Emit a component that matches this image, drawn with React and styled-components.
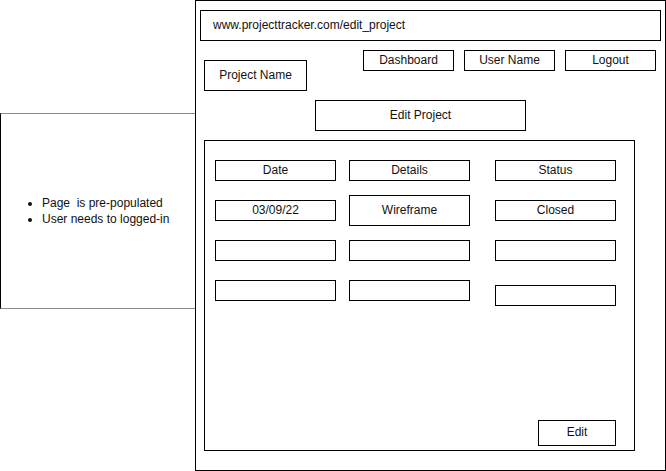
import React from 'react';
import styled, { createGlobalStyle } from 'styled-components';

const Global = createGlobalStyle`
  html, body {
    margin: 0;
    padding: 0;
    background: #fff;
  }
  body {
    font-family: "Liberation Sans", Arial, sans-serif;
    font-size: 12px;
    color: #111;
  }
`;

const Page = styled.div`
  display: flex;
  align-items: flex-start;
  width: 666px;
  height: 471px;
  overflow: hidden;
`;

const Note = styled.div`
  box-sizing: border-box;
  width: 195px;
  height: 196px;
  margin-top: 113px;
  border-left: 1px solid #000;
  border-top: 1px solid #8a8a8a;
  border-bottom: 1px solid #8a8a8a;
  display: flex;
  align-items: center;

  ul {
    margin: 0;
    padding: 0 0 1px 41px;
    line-height: 16px;
  }
  li {
    white-space: pre;
  }
`;

const Frame = styled.div`
  box-sizing: border-box;
  width: 471px;
  height: 471px;
  border: 1px solid #000;
  padding: 9px 4px 0;
  display: flex;
  flex-direction: column;
`;

const Box = styled.div`
  box-sizing: border-box;
  border: 1px solid #000;
  display: flex;
  align-items: center;
  justify-content: ${p => (p.$left ? 'flex-start' : 'center')};
  width: ${p => p.$w || 'auto'};
  height: ${p => p.$h || '21px'};
  padding: 0 0 2px ${p => (p.$left ? '12px' : '0')};
  white-space: nowrap;
`;

const UrlBar = styled(Box)`
  height: 31px;
`;

const Header = styled.div`
  display: flex;
  justify-content: space-between;
  align-items: flex-start;
  margin-top: 9px;
  padding: 0 5px 0 4px;
`;

const ProjectName = styled(Box)`
  margin-top: 10px;
`;

const Nav = styled.div`
  display: flex;
  gap: 10px;
`;

const Title = styled(Box)`
  margin: 9px 0 0 115px;
`;

const Panel = styled.div`
  box-sizing: border-box;
  width: 431px;
  height: 311px;
  margin: 9px 0 0 4px;
  border: 1px solid #000;
  padding: 19px 18px 4px 10px;
  display: flex;
  flex-direction: column;
`;

const Grid = styled.div`
  display: grid;
  grid-template-columns: 134px 146px 121px;
  grid-auto-rows: 40px;
  align-items: start;
`;

const Cell = styled(Box)`
  width: 121px;
  height: ${p => (p.$tall ? '31px' : '21px')};
  margin-top: ${p => (p.$tall ? '-5px' : p.$drop ? '5px' : '0')};
`;

const Footer = styled.div`
  margin-top: auto;
  display: flex;
  justify-content: flex-end;
`;

const rows = [
  ['Date', 'Details', 'Status'],
  ['03/09/22', 'Wireframe', 'Closed'],
  ['', '', ''],
  ['', '', ''],
];

export default function App() {
  return (
    <>
      <Global />
      <Page>
        <Note>
          <ul>
            <li>Page  is pre-populated</li>
            <li>User needs to logged-in</li>
          </ul>
        </Note>
        <Frame>
          <UrlBar $left>www.projecttracker.com/edit_project</UrlBar>
          <Header>
            <ProjectName $w="103px" $h="31px">Project Name</ProjectName>
            <Nav>
              <Box $w="91px">Dashboard</Box>
              <Box $w="91px">User Name</Box>
              <Box $w="91px">Logout</Box>
            </Nav>
          </Header>
          <Title $w="211px" $h="31px">Edit Project</Title>
          <Panel>
            <Grid>
              {rows.map((row, r) =>
                row.map((text, c) => (
                  <Cell
                    key={`${r}-${c}`}
                    $tall={r === 1 && c === 1}
                    $drop={r === 3 && c === 2}
                  >
                    {text}
                  </Cell>
                ))
              )}
            </Grid>
            <Footer>
              <Box $w="78px" $h="26px">Edit</Box>
            </Footer>
          </Panel>
        </Frame>
      </Page>
    </>
  );
}
